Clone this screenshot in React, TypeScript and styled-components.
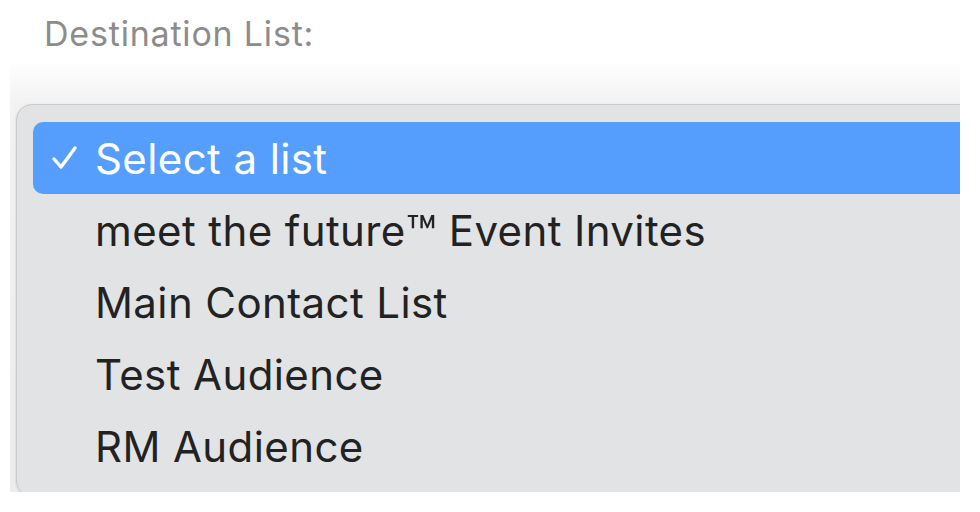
import React from 'react';
import styled, { createGlobalStyle } from 'styled-components';

const GlobalStyle = createGlobalStyle`
  html, body {
    margin: 0;
    padding: 0;
    background: #ffffff;
  }

  body {
    font-family: Inter, "Noto Sans", "Liberation Sans", sans-serif;
    -webkit-font-smoothing: antialiased;
  }
`;

const Page = styled.div`
  width: 980px;
  height: 512px;
  overflow: hidden;
  display: flex;
  flex-direction: column;
`;

const FieldLabel = styled.div`
  padding: 14px 0 0 44px;
  height: 60px;
  box-sizing: border-box;
  font-size: 34px;
  line-height: 40px;
  color: #8c8c8c;
  letter-spacing: 0.8px;
`;

const Backdrop = styled.div`
  margin-left: 10px;
  width: 950px;
  height: 432px;
  overflow: hidden;
  background: linear-gradient(to bottom, #ffffff 0px, #f2f2f2 44px, #ececec 100%);
  padding: 44px 0 0 6px;
  box-sizing: border-box;
`;

const Menu = styled.ul`
  list-style: none;
  margin: 0;
  width: 1000px;
  padding: 17px 0 14px 16px;
  box-sizing: border-box;
  background: #e1e3e5;
  border: 1px solid #c9cacb;
  border-radius: 16px;
  box-shadow: -1px 0 2px rgba(0, 0, 0, 0.06);
  display: flex;
  flex-direction: column;
`;

const Option = styled.li<{ $selected?: boolean }>`
  display: flex;
  align-items: center;
  height: 72px;
  padding-left: 62px;
  position: relative;
  border-radius: 10px;
  font-size: 42px;
  letter-spacing: 0.4px;
  white-space: pre;
  color: ${({ $selected }) => ($selected ? '#ffffff' : '#222222')};
  background: ${({ $selected }) => ($selected ? '#559efd' : 'transparent')};
`;

const Trademark = styled.span`
  font-size: 1.2em;
  line-height: 0;
  letter-spacing: 0;
  vertical-align: -0.12em;
`;

const Check = styled.span`
  position: absolute;
  left: 18px;
  top: 50%;
  transform: translateY(-50%);
  display: flex;
`;

const options = [
  'Select a list',
  'meet the future™ Event Invites',
  'Main Contact List',
  'Test Audience',
  'RM Audience'
];

const renderName = (name: string) => {
  const parts = name.split('™');

  if (parts.length === 1) {
    return name;
  }

  return (
    <span>
      {parts[0]}
      <Trademark>™</Trademark>
      {parts[1]}
    </span>
  );
};

export default function App () {
  return (
    <>
      <GlobalStyle />
      <Page>
        <FieldLabel>Destination List:</FieldLabel>
        <Backdrop>
          <Menu>
            {options.map((name, i) => (
              <Option
                $selected={i === 0}
                key={name}
              >
                {i === 0 && (
                  <Check>
                    <svg
                      fill='none'
                      height='26'
                      stroke='#ffffff'
                      strokeLinecap='round'
                      strokeLinejoin='round'
                      strokeWidth='3.4'
                      viewBox='0 0 28 26'
                      width='28'
                    >
                      <path d='M3 14 L10 22 L24 3' />
                    </svg>
                  </Check>
                )}
                {renderName(name)}
              </Option>
            ))}
          </Menu>
        </Backdrop>
      </Page>
    </>
  );
}
